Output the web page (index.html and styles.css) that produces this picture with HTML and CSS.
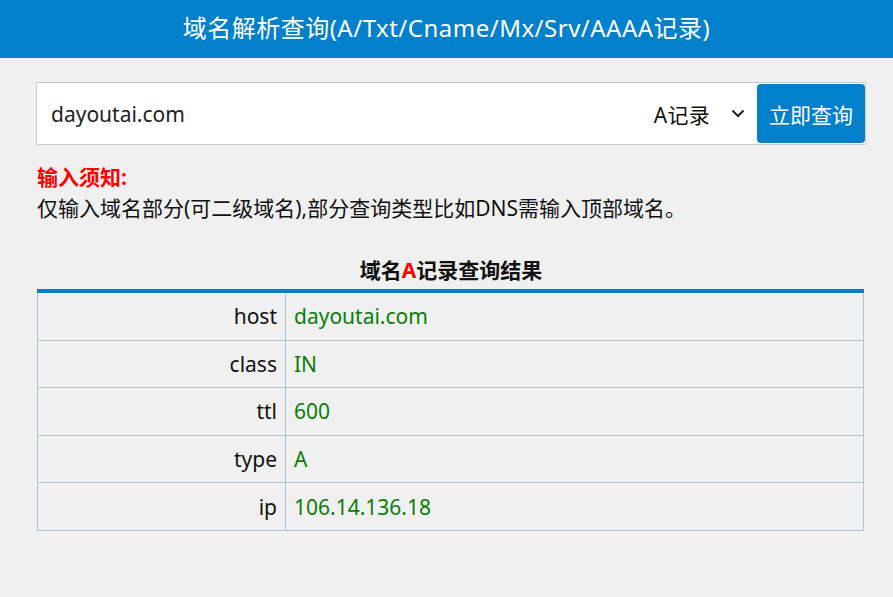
FILE: index.html
```html
<!DOCTYPE html>
<html lang="zh-CN">
<head>
<meta charset="utf-8">
<title>域名解析查询</title>
<link rel="stylesheet" href="styles.css">
</head>
<body>
<header class="topbar">
  <h1 class="title">域名解析查询(A/Txt/Cname/Mx/Srv/AAAA记录)</h1>
</header>
<main class="main">
  <form class="search">
    <input class="search-input" type="text" value="dayoutai.com">
    <div class="type-select">
      <span class="type-label">A记录</span>
      <svg class="chevron" width="14" height="9" viewBox="0 0 14 9"><path d="M1.5 1.5 L7 7 L12.5 1.5" fill="none" stroke="#222" stroke-width="2"/></svg>
    </div>
    <button class="search-btn" type="button">立即查询</button>
  </form>
  <div class="notice">
    <div class="notice-title">输入须知:</div>
    <div class="notice-text">仅输入域名部分(可二级域名),部分查询类型比如DNS需输入顶部域名。</div>
  </div>
  <h2 class="result-title">域名<span class="red">A</span>记录查询结果</h2>
  <table class="result">
    <tr><th>host</th><td>dayoutai.com</td></tr>
    <tr><th>class</th><td>IN</td></tr>
    <tr><th>ttl</th><td>600</td></tr>
    <tr><th>type</th><td>A</td></tr>
    <tr><th>ip</th><td>106.14.136.18</td></tr>
  </table>
</main>
</body>
</html>
```
FILE: styles.css
```css
html, body {
  margin: 0;
  padding: 0;
  background: #f0f0f0;
  font-family: "Noto Sans", "Noto Sans CJK SC", sans-serif;
  color: #111;
}
.topbar {
  background: #0280cc;
  height: 58px;
  display: flex;
  align-items: center;
  justify-content: center;
  box-sizing: border-box;
  padding-bottom: 5px;
}
.title {
  margin: 0;
  color: #fff;
  font-size: 24px;
  font-weight: normal;
  letter-spacing: 0.5px;
}
.main {
  padding: 24px 27px 0 36px;
}
.search {
  display: flex;
  align-items: center;
  height: 61px;
  border: 1px solid #cccccc;
  background: #fff;
  margin: 0;
}
.search-input {
  flex: 1;
  border: none;
  outline: none;
  height: 100%;
  padding: 0 0 0 14px;
  font-family: inherit;
  font-size: 21px;
  color: #222;
  background: transparent;
}
.type-select {
  display: flex;
  align-items: center;
  gap: 21px;
  padding: 0 12px 0 0;
  font-size: 21px;
  color: #111;
}
.type-label {
  letter-spacing: 0.3px;
}
.chevron {
  display: block;
}
.search-btn {
  width: 108px;
  height: 59px;
  margin: 0;
  border: none;
  border-radius: 4px;
  background: #0280cc;
  color: #fff;
  font-family: inherit;
  font-size: 21px;
  padding: 0;
}
.notice {
  margin-top: 17px;
  padding-left: 1px;
  font-size: 21px;
  line-height: 31px;
}
.notice-title {
  color: #ff0000;
  font-weight: bold;
}
.notice-text {
  color: #111;
}
.result-title {
  margin: 33px 0 0 0;
  text-align: center;
  font-size: 21px;
  font-weight: bold;
  line-height: 26px;
  color: #111;
}
.red {
  color: #ff0000;
}
.result {
  margin: 6px 0 0 1px;
  width: 827px;
  border-collapse: collapse;
  border-top: 4px solid #0280cc;
  font-size: 21px;
}
.result th, .result td {
  border: 1px solid #a9c6d6;
  height: 46.6px;
  padding: 0 8px;
  font-weight: normal;
}
.result tr:first-child th, .result tr:first-child td {
  border-top: none;
}
.result th {
  width: 231px;
  text-align: right;
  color: #111;
}
.result td {
  text-align: left;
  color: #0a7d0a;
}
```
